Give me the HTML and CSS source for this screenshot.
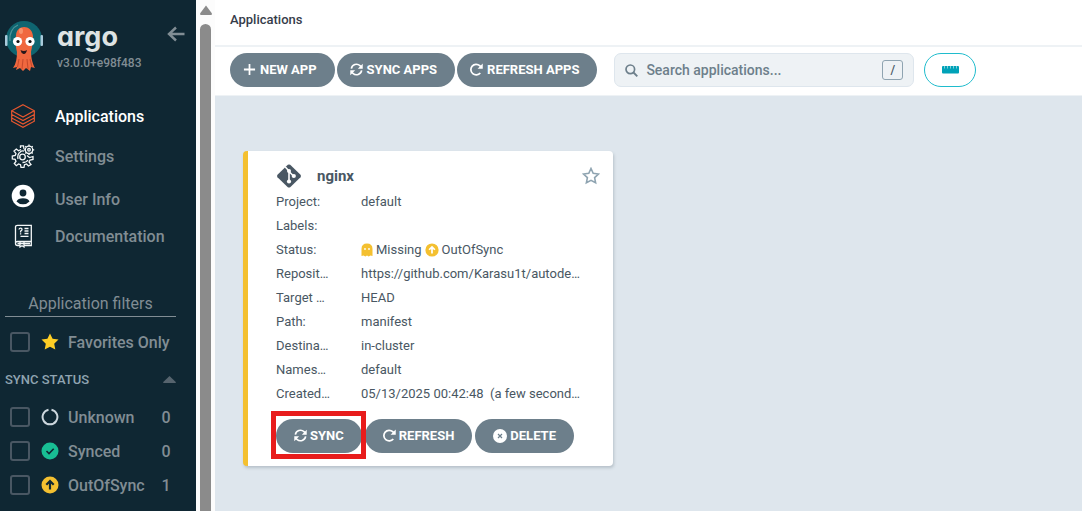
FILE: index.html
```html
<!DOCTYPE html>
<html lang="en">
<head>
<meta charset="utf-8">
<title>Applications</title>
<link rel="stylesheet" href="styles.css">
</head>
<body>
<svg class="sprite" aria-hidden="true">
  <symbol id="i-sync" viewBox="0 0 24 24"><g fill="none" stroke="currentColor" stroke-width="3"><path d="M2.500 10.500A9.600 9.600 0 0 1 18.500 5L20.500 7M21.500 13.500A9.600 9.600 0 0 1 5.500 19L3.500 17"/></g><path fill="currentColor" d="M23.500 1.500V10.500H14.500ZM.5 22.500V13.500H9.500Z"/></symbol>
  <symbol id="i-refresh" viewBox="0 0 24 24"><path fill="none" stroke="currentColor" stroke-width="3.200" d="M19 18.500A9.800 9.800 0 1 1 18 5L20.500 7.500"/><path fill="currentColor" d="M23.500 1V10.500H14Z"/></symbol>
  <symbol id="i-up" viewBox="0 0 18 18"><circle cx="9" cy="9" r="8.500" fill="#f4c030" stroke="none"/><path d="M9 13.500V5.500M5.300 8.700L9 5L12.700 8.700" fill="none" stroke-width="2.200"/></symbol>
</svg>
<div class="layout">
  <aside class="sidebar">
    <div class="brand">
      <svg class="mascot" viewBox="0 0 38 50" aria-hidden="true">
        <circle cx="19" cy="18" r="18" fill="#0f6570"/>
        <rect x="0" y="14" width="2.500" height="11" rx="1" fill="#a9cbdc"/><rect x="35.500" y="14" width="2.500" height="11" rx="1" fill="#a9cbdc"/>
        <path d="M5 20C4 12 8 6 13 4" fill="none" stroke="#4f9298" stroke-width="1.200"/>
        <path d="M11 15C11 3 27 3 28 15C28 22 27 26 26 31C26 37 28 44 30 47L26 46L25 50L21 47L18 50L15 47L11 49L12 46L8 47C11 43 12 37 12 31C11 26 10 22 11 15Z" fill="#f0683f"/>
        <path d="M14 38L12.500 46M18 38L17 48M22 38L23 48M25 38L27 46" stroke="#c94b2d" stroke-width="1.100"/>
        <ellipse cx="16" cy="10" rx="2" ry="3" fill="#f8916a"/>
        <circle cx="12.500" cy="20.500" r="4.600" fill="#fff"/><circle cx="25" cy="20.500" r="4.600" fill="#fff"/>
        <circle cx="13" cy="20.500" r="1.600" fill="#111"/><circle cx="25" cy="20.500" r="1.600" fill="#111"/>
        <path d="M15.500 29Q19 31 22 29Q21 33.500 18.500 33Q16 32 15.500 29Z" fill="#28171a"/>
      </svg>
      <div class="brand-text"><span class="wordmark">argo</span><span class="version">v3.0.0+e98f483</span></div>
      <button class="collapse" aria-label="Collapse sidebar"><svg viewBox="0 0 18 16" width="18" height="16"><path d="M9 1.500L2 8L9 14.500M2 8H17.500" fill="none" stroke="currentColor" stroke-width="2.400"/></svg></button>
    </div>
    <nav class="nav">
      <a class="nav-item active" href="#"><svg viewBox="0 0 24 24" width="24" height="24" fill="none" stroke="#e9572f" stroke-width="1.200"><path d="M12 .8L23.300 6.800L12 13L.7 6.800Z"/><path d="M.7 7V10.500L12 16.500L23.300 10.500V7M.7 10.500V14L12 20L23.300 14V10.500M.7 14V17.200L12 23.300L23.300 17.200V14"/></svg><span>Applications</span></a>
      <a class="nav-item" href="#"><svg viewBox="0 0 24 24" width="24" height="24" fill="none" stroke="#f4f7f8" stroke-width="1.300"><path d="M9.500 4L9.500 1.800H12.500L13 5M16 11.500L18.500 13.500L22 12.500V15.500L19 16L18 18L20 20.500L17.500 22L15.500 20L13.500 20.700L13 23.300H10L9.500 20.700L7.500 20L5.300 21.700L3.300 19.500L5 17.400L4.200 15.400L1.300 15V12L4.200 11.500L5 9.500L3 7L5.300 5L7.500 6.800L10 5.500M13 7.200Q11 6.400 9 8M17 16Q15.500 18.500 11.500 18.500M7 15Q6 10 9.500 8"/><circle cx="11.500" cy="13" r="2.800"/><circle cx="18" cy="5.800" r="3.700"/><circle cx="18" cy="5.800" r="1.300"/><path d="M18 .5V2M18 9.500V11M12.800 5.800H14.300M21.700 5.800H23.200M14.300 2.100L15.300 3.100M20.700 8.500L21.700 9.500M21.700 2.100L20.700 3.100M15.300 8.500L14.300 9.500"/></svg><span>Settings</span></a>
      <a class="nav-item user" href="#"><svg viewBox="0 0 24 24" width="24" height="24"><circle cx="12" cy="12" r="11.300" fill="#fff"/><circle cx="12" cy="9" r="3.400" fill="#0f2733"/><path d="M5.500 17.500Q7 14.200 12 14.200T18.500 17.500Q16 20.300 12 20.300T5.500 17.500Z" fill="#0f2733"/></svg><span>User Info</span></a>
      <a class="nav-item" href="#"><svg viewBox="0 0 24 24" width="24" height="24" fill="none" stroke="#f4f7f8" stroke-width="1.300"><path d="M4.500 19V3Q4.500 1.300 6.500 1.300H20.300V17.500H6.500Q4.500 17.500 4.500 19.500T6.500 21.500H9M20.300 17.500V21.500H13M6.500 19.500H19M9 18V23L11 21.800L13 23V18"/><path d="M13.500 4.500H17.500M13.500 7H17.500M13.500 9.500H17.500M9.500 12.300H17.500"/><path d="M8 5.500Q8.200 4.200 9.600 4.200T11 5.600Q11 6.700 9.600 7.200V8.500M9.600 9.300V10.500"/></svg><span>Documentation</span></a>
    </nav>
    <section class="filters">
      <h2 class="filters-title">Application filters</h2>
      <label class="filter"><input type="checkbox"><svg viewBox="0 0 18 18" width="18" height="18"><path d="M9 .5L11.600 5.800L17.500 6.600L13.200 10.700L14.300 16.600L9 13.800L3.700 16.600L4.800 10.700L.5 6.600L6.400 5.800Z" fill="#ffce25"/></svg><span class="name">Favorites Only</span></label>
      <div class="group-head"><span>SYNC STATUS</span><svg viewBox="0 0 13 7" width="13" height="7"><path d="M6.500 0L13 6.200Q13 7 12 7H1Q0 7 0 6.200Z" fill="#56646e"/></svg></div>
      <div class="group">
        <label class="filter"><input type="checkbox"><svg viewBox="0 0 18 18" width="18" height="18"><path d="M10.500 1.700A7.400 7.400 0 1 1 7.500 1.700" fill="none" stroke="#ccd6dd" stroke-width="2"/></svg><span class="name">Unknown</span><span class="count">0</span></label>
        <label class="filter"><input type="checkbox"><svg viewBox="0 0 18 18" width="18" height="18"><circle cx="9" cy="9" r="8.500" fill="#18be94"/><path d="M5.500 9L8 11.500L12.700 6.700" fill="none" stroke="#0f2733" stroke-width="1.600"/></svg><span class="name">Synced</span><span class="count">0</span></label>
        <label class="filter"><input type="checkbox"><svg class="dark" viewBox="0 0 18 18" width="18" height="18"><use href="#i-up"/></svg><span class="name">OutOfSync</span><span class="count">1</span></label>
      </div>
    </section>
  </aside>
  <div class="scrollbar" aria-hidden="true"><svg viewBox="0 0 12 10" width="12" height="10"><path d="M6 .5L12 8.500Q12 10 11 10H1Q0 10 0 8.500Z" fill="#8b8b8b"/></svg><div class="thumb"></div></div>
  <main class="main">
    <header class="topbar"><h1>Applications</h1></header>
    <div class="toolbar">
      <div class="actions">
        <button class="btn"><svg viewBox="0 0 14 14" width="13" height="13"><path d="M7 1V13M1 7H13" stroke="currentColor" stroke-width="1.900"/></svg>NEW APP</button>
        <button class="btn"><svg width="13" height="13"><use href="#i-sync"/></svg>SYNC APPS</button>
        <button class="btn"><svg width="13" height="13"><use href="#i-refresh"/></svg>REFRESH APPS</button>
      </div>
      <label class="search"><svg viewBox="0 0 13 13" width="13" height="13"><circle cx="5.300" cy="5.300" r="4.300" fill="none" stroke="currentColor" stroke-width="1.700"/><path d="M8.500 8.500L12.300 12.300" stroke="currentColor" stroke-width="1.900"/></svg><input type="text" placeholder="Search applications..." aria-label="Search applications"><kbd>/</kbd></label>
      <button class="ruler" aria-label="Health status bar"><svg viewBox="0 0 17 8" width="17" height="8"><rect y="0" width="17" height="7.500" rx="1" fill="#00a2b8"/><path d="M2.500 0V2.500M5.500 0V2.500M8.500 0V2.500M11.500 0V2.500M14.500 0V2.500" stroke="#fff" stroke-opacity=".5"/></svg></button>
    </div>
    <div class="cards">
      <article class="card">
        <div class="card-head">
          <svg viewBox="0 0 26 24" width="26" height="24"><path d="M11.800 .8Q13 0 14.200 .8L24.500 10.700Q25.500 12 24.500 13.200L14.200 23.200Q13 24 11.800 23.200L1.500 13.200Q.5 12 1.500 10.700Z" fill="#495763"/><path d="M9.300 3L13 7V17.500M13 7.500L17.500 12" fill="none" stroke="#fff" stroke-width="1.600"/><circle cx="13" cy="7" r="2" fill="#fff"/><circle cx="13" cy="17.500" r="2.100" fill="#fff"/><circle cx="17.800" cy="12" r="2.100" fill="#fff"/></svg>
          <h2>nginx</h2>
          <button class="star" aria-label="Favorite"><svg viewBox="0 0 18 18" width="18" height="18"><path d="M9 1.500L11.200 6.300L16.500 7L12.600 10.600L13.600 15.800L9 13.300L4.400 15.800L5.400 10.600L1.500 7L6.800 6.300Z" fill="none" stroke="#8fa4b1" stroke-width="1.600"/></svg></button>
        </div>
        <dl class="details">
          <dt>Project:</dt><dd>default</dd>
          <dt>Labels:</dt><dd></dd>
          <dt>Status:</dt><dd class="status"><svg viewBox="0 0 12 14" width="12" height="14"><path d="M.5 13V6Q.5 .5 6 .5T11.500 6V13L9.500 12.500L7.700 13.500L6 12.500L4.300 13.500L2.500 12.500Z" fill="#f4c030"/><circle cx="4" cy="6" r=".9" fill="#fff"/><circle cx="8" cy="6" r=".9" fill="#fff"/></svg><span>Missing</span><svg class="light" viewBox="0 0 18 18" width="14" height="14"><use href="#i-up"/></svg><span>OutOfSync</span></dd>
          <dt>Reposit…</dt><dd>https://github.com/Karasu1t/autode…</dd>
          <dt>Target …</dt><dd>HEAD</dd>
          <dt>Path:</dt><dd>manifest</dd>
          <dt>Destina…</dt><dd>in-cluster</dd>
          <dt>Names…</dt><dd>default</dd>
          <dt>Created…</dt><dd>05/13/2025 00:42:48 &nbsp;(a few second…</dd>
        </dl>
        <div class="card-actions">
          <div class="highlighted"><button class="btn"><svg width="13" height="13"><use href="#i-sync"/></svg>SYNC</button></div>
          <button class="btn"><svg width="13" height="13"><use href="#i-refresh"/></svg>REFRESH</button>
          <button class="btn"><svg viewBox="0 0 14 14" width="14" height="14"><circle cx="7" cy="7" r="7" fill="#fff"/><path d="M5 5L9 9M9 5L5 9" stroke="#6d7f8b" stroke-width="1.200"/></svg>DELETE</button>
        </div>
      </article>
    </div>
  </main>
</div>
</body>
</html>
```
FILE: styles.css
```css
* { box-sizing: border-box; }
body { margin: 0; font-family: Roboto, "Liberation Sans", sans-serif; font-size: 13px; color: #495763; }
h1, h2, dl, dd { margin: 0; }
a { text-decoration: none; }
button { font-family: inherit; border: 0; padding: 0; background: none; cursor: pointer; }
svg { display: block; flex: none; }
.sprite { position: absolute; width: 0; height: 0; }

.layout { display: flex; height: 100vh; overflow: hidden; }

/* Sidebar */
.sidebar { flex: none; width: 196px; background: #0f2733; color: #818d94; overflow: hidden; }
.brand { display: flex; align-items: flex-start; padding: 21px 11px 0 5px; height: 104px; }
.mascot { width: 38px; height: 50px; }
.brand-text { display: flex; flex-direction: column; flex: 1; margin-left: 14px; }
.wordmark { font: 700 27px/32px Inter, sans-serif; font-feature-settings: "cv11"; color: #dee3e3; }
.version { padding-top: 1px; font-size: 12px; font-weight: 500; line-height: 18px; }
.collapse { color: #818d94; padding-top: 5px; }
.nav-item { display: flex; align-items: flex-start; gap: 20px; margin-bottom: 15px; padding-left: 11px; font-size: 16px; font-weight: 500; line-height: 24px; color: #818d94; }
.nav-item span { padding-top: 1px; }
.nav-item.active { color: #fff; }
.nav-item.user { margin-bottom: 12px; }
.nav-item.user span { padding-top: 4px; }
.filters { padding: 27px 20px 0 5px; }
.filters-title { border-bottom: 1px solid #818d94; text-align: center; font-size: 16px; font-weight: 400; line-height: 25px; }
.filter { display: flex; align-items: center; height: 34px; padding-left: 5px; font-size: 16px; font-weight: 500; }
.filter input { appearance: none; flex: none; width: 20px; height: 20px; margin: 0 11px 0 0; border: 2px solid #495763; border-radius: 3px; }
.filter .name { flex: 1; margin-left: 9px; white-space: nowrap; }
.filter .count { width: 20px; text-align: center; }
.filters-title + .filter { margin-top: 8px; }
.group-head { display: flex; align-items: center; justify-content: space-between; height: 41px; color: #8fa4b1; font-weight: 500; }

/* Scroll track */
.scrollbar { flex: none; display: flex; flex-direction: column; align-items: center; gap: 9px; width: 19px; padding-top: 5px; background: #fcfcfc; }
.thumb { flex: 1; width: 11px; border-radius: 6px 6px 0 0; background: #8b8b8b; }

/* Main area */
.main { flex: 1; min-width: 0; background: #dee6ed; }
.topbar { padding: 8px 15px 13px; background: #fff; border-bottom: 2px solid #eef2f5; }
.topbar h1 { font-size: 13px; font-weight: 500; line-height: 24px; color: #363c4a; }
.toolbar { display: flex; align-items: center; padding: 6px 15px 8px; background: #fff; border-bottom: 1px solid #eef2f5; }
.actions { display: flex; gap: 2px; margin-right: 17px; }
.btn { display: flex; align-items: center; gap: 4px; height: 34px; padding: 0 18px 1px 13px; border-radius: 17px; background: #6d7f8b; color: #fff; font-size: 13px; font-weight: 700; white-space: nowrap; }
.search { display: flex; align-items: center; gap: 8px; width: 300px; height: 34px; padding: 0 10px; border: 1px solid #dee6ed; border-radius: 7px; background: #eef2f5; color: #6d7f8b; }
.search input { flex: 1; min-width: 0; padding: 0; border: 0; background: none; outline: 0; font: 500 14px/20px Roboto, sans-serif; color: #495763; }
.search input::placeholder { color: #6d7f8b; opacity: 1; }
.search kbd { width: 21px; height: 20px; border: 1px solid #8fa4b1; border-radius: 3px; font: 500 12px/18px Roboto, sans-serif; text-align: center; color: #495763; }
.ruler { display: flex; align-items: center; justify-content: center; width: 52px; height: 34px; margin-left: 10px; border: 1px solid #1fbccd; border-radius: 17px; }

/* Application cards */
.cards { display: grid; grid-template-columns: repeat(auto-fill, 370px); gap: 28px; padding: 55px 28px; }
.card { padding: 12px 13px 13px 28px; border-left: 5px solid #f4c030; border-radius: 4px; background: #fff; box-shadow: 1px 2px 3px rgba(73, 87, 99, .25); }
.card-head { display: flex; align-items: center; height: 25px; margin-bottom: 2px; }
.card-head h2 { flex: 1; margin-left: 15px; font-size: 15px; font-weight: 700; }
.details { display: grid; grid-template-columns: 85px 1fr; grid-auto-rows: 24px; line-height: 24px; white-space: nowrap; }
.status { display: flex; align-items: center; gap: 3px; }
.dark { stroke: #0f2733; }
.light { stroke: #fff; }
.card-actions { display: flex; gap: 3px; margin-top: 13px; }
.card-actions .btn { gap: 3px; padding: 0 18px 1px; }
.highlighted { position: relative; }
.highlighted::after { content: ""; position: absolute; inset: -8px -4px -6px -5px; border: 5px solid #e81c1c; pointer-events: none; }
```
